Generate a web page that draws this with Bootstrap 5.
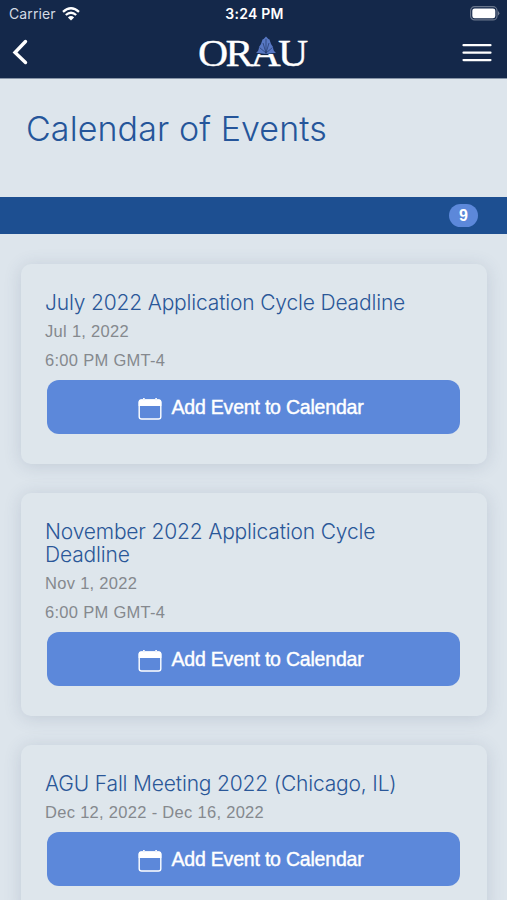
<!DOCTYPE html>
<html lang="en">
<head>
<meta charset="utf-8">
<meta name="viewport" content="width=device-width, initial-scale=1">
<title>Calendar of Events</title>
<link href="https://cdn.jsdelivr.net/npm/bootstrap@5.3.0/dist/css/bootstrap.min.css" rel="stylesheet">
<style>
  body { background: #dde5ec; font-family: "Liberation Sans", Arial, sans-serif; height: 900px; overflow: hidden; }
  .app-header { background: #14284a; height: 79px; border-bottom: 1px solid #8795a8; color: #fff; }
  .status-row { height: 27px; font-family: Inter, sans-serif; font-size: 14px; line-height: 27px; padding: 0 7px 0 9px; }
  .status-row > *, .nav-row > * { flex: 1 1 0; }
  .carrier { color: #d3dae4; letter-spacing: .1px; gap: 6px; }
  .clock { font-weight: 600; font-size: 14px; letter-spacing: .25px; }
  .nav-row { height: 51px; padding: 0 15px 0 12px; }
  .nav-row button { line-height: 0; }
  .logo { overflow: visible; }
  .page-head { height: 118px; padding: 30px 26px 0; }
  .page-head h1 { font: 300 34px/40px Inter, sans-serif; letter-spacing: .1px; color: #25559a; white-space: nowrap; }
  .count-bar { background: #1d4f91; height: 37px; padding-right: 29px; }
  .count-pill { background: #5c88da; width: 29px; height: 23px; font: 700 16px/24px "Liberation Sans", sans-serif; padding: 0; }
  .events { padding: 30px 20px 0 21px; gap: 29px; }
  .event-card { background: #dee6ec; border: 0; border-radius: 10px; box-shadow: 0 2px 17px rgba(60,80,110,.17); padding: 27px 24px 30px; }
  .event-card h2 { font: 300 21px/23px Inter, sans-serif; letter-spacing: -.17px; color: #2a5798; margin: 0 0 3px; }
  .event-card p { font-size: 16.5px; line-height: 29px; color: #85898e; margin: 0; letter-spacing: .3px; }
  .add-btn, .add-btn:hover { background: #5c88da; color: #fff; height: 54px; border: 0; border-radius: 12px; margin: 5px 3px 0 2px; font-size: 19.5px; padding: 2px 5px 0 0; -webkit-text-stroke: .4px #fff; letter-spacing: -.2px; }
  .add-btn svg { margin: 2px 9px 0 0; }
</style>
<script src="https://cdn.jsdelivr.net/npm/bootstrap@5.3.0/dist/js/bootstrap.bundle.min.js"></script>
</head>
<body>
<svg width="0" height="0" class="d-none">
  <symbol id="cal" viewBox="0 0 24 22">
    <path d="M1.2 4.5Q1.2 2 3.6 2H20.4Q22.8 2 22.8 4.5V18.8Q22.8 21 20.4 21H3.6Q1.2 21 1.2 18.8Z" fill="none" stroke="#fff" stroke-width="1.4"/>
    <path d="M.6 8V4Q.6 1.6 3 1.6H4.6Q6 3.2 7.2 1.6H16.8Q18 3.2 19.4 1.6H21Q23.4 1.6 23.4 4V8Z" fill="#fff"/>
    <path d="M5.9 0V1.5M18.1 0V1.5" stroke="#fff" stroke-width="1.6"/>
  </symbol>
</svg>
<header class="app-header">
  <div class="status-row d-flex align-items-center">
    <div class="carrier d-flex align-items-center">Carrier
      <svg width="18" height="14" viewBox="0 0 18 14" fill="none" stroke="#fff" stroke-width="2.3"><path d="M1 4.8Q9-2.2 17 4.8"/><path d="M3.8 8Q9 3.5 14.2 8"/><path d="M9 13.5L5.9 10.4Q9 7.8 12.1 10.4Z" fill="#fff" stroke="none"/></svg>
    </div>
    <div class="clock text-center">3:24 PM</div>
    <div class="d-flex justify-content-end">
      <svg width="30" height="15" viewBox="0 0 30 15"><rect x=".6" y=".7" width="26.4" height="13.2" rx="4" fill="none" stroke="#69768c" stroke-width="1.2"/><rect x="2.3" y="2.4" width="23" height="9.8" rx="2.3" fill="#fff"/><path d="M28.2 5Q30.4 7.3 28.2 9.6Z" fill="#8a95a6"/></svg>
    </div>
  </div>
  <nav class="nav-row d-flex align-items-center">
    <div><button class="btn border-0 p-0" aria-label="Back"><svg width="17" height="27" viewBox="0 0 17 27"><path d="M13.5 2.5L3 13.5L13.5 23.5" fill="none" stroke="#fff" stroke-width="3.4" stroke-linecap="round"/></svg></button></div>
    <div class="text-center lh-1">
      <svg class="logo" width="116" height="50" viewBox="-4 -38 116 50" role="img" aria-label="ORAU">
        <g transform="scale(1.1 1)">
          <text x="0" y="0" font-family="Liberation Serif, serif" font-size="38" letter-spacing="-2.5" fill="#fff" stroke="#fff" stroke-width=".35">ORAU</text>
        </g>
        <path d="M58.5 -30H77.5V-12H58.5Z" fill="#14284a"/>
        <path d="M68 -29.5Q70 -27 71.5 -26.5Q72.5 -22 75 -19Q75 -15 78 -13.2L68 -12L58 -13.2Q61 -15 61 -19Q63.5 -22 64.5 -26.5Q66 -27 68 -29.5Z" fill="#5878c4"/>
        <path d="M68 -12V-27M68 -13L65 -23M68 -13L71 -23M68 -13L61.5 -18.5M68 -13L74.5 -18.5" stroke="#23396c" stroke-width=".7"/>
      </svg>
    </div>
    <div class="text-end"><button class="btn border-0 p-0" aria-label="Menu"><svg width="30" height="20" viewBox="0 0 30 20"><path d="M1.5 2.2H28.5M1.5 9.7H28.5M1.5 17.1H28.5" stroke="#fff" stroke-width="2.2" stroke-linecap="round"/></svg></button></div>
  </nav>
</header>
<main>
  <div class="page-head"><h1 class="m-0">Calendar of Events</h1></div>
  <div class="count-bar d-flex align-items-center justify-content-end"><span class="badge rounded-pill count-pill">9</span></div>
  <div class="events d-flex flex-column">
    <article class="card event-card">
      <h2>July 2022 Application Cycle Deadline</h2>
      <p>Jul 1, 2022</p>
      <p>6:00 PM GMT-4</p>
      <button class="btn add-btn d-flex align-items-center justify-content-center"><svg width="24" height="22"><use href="#cal"/></svg>Add Event to Calendar</button>
    </article>
    <article class="card event-card">
      <h2>November 2022 Application Cycle Deadline</h2>
      <p>Nov 1, 2022</p>
      <p>6:00 PM GMT-4</p>
      <button class="btn add-btn d-flex align-items-center justify-content-center"><svg width="24" height="22"><use href="#cal"/></svg>Add Event to Calendar</button>
    </article>
    <article class="card event-card">
      <h2>AGU Fall Meeting 2022 (Chicago, IL)</h2>
      <p>Dec 12, 2022 - Dec 16, 2022</p>
      <button class="btn add-btn d-flex align-items-center justify-content-center"><svg width="24" height="22"><use href="#cal"/></svg>Add Event to Calendar</button>
    </article>
  </div>
</main>
</body>
</html>
